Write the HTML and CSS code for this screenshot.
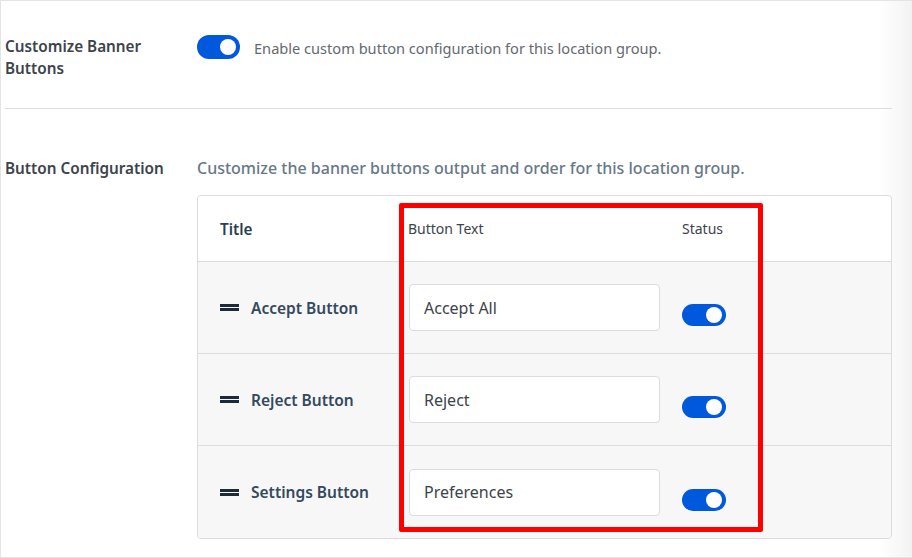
FILE: index.html
```html
<!DOCTYPE html>
<html lang="en">
<head>
    <meta charset="UTF-8">
    <meta name="viewport" content="width=device-width, initial-scale=1.0">
    <title>Banner Buttons</title>
    <link rel="stylesheet" href="styles.css">
</head>
<body>
    <div class="panel">
        <!-- Customize banner buttons -->
        <div class="setting setting-first">
            <div class="setting-label">Customize Banner Buttons</div>
            <div class="setting-field inline">
                <span class="toggle"><span class="knob"></span></span>
                <span class="hint">Enable custom button configuration for this location group.</span>
            </div>
        </div>

        <!-- Button configuration -->
        <div class="setting setting-second">
            <div class="setting-label">Button Configuration</div>
            <div class="setting-field">
                <p class="intro">Customize the banner buttons output and order for this location group.</p>

                <div class="btn-table">
                    <div class="tr th">
                        <div class="cell title-head">Title</div>
                        <div class="cell small-head">Button Text</div>
                        <div class="cell small-head">Status</div>
                    </div>
                    <div class="tr">
                        <div class="cell name"><span class="handle"></span>Accept Button</div>
                        <div class="cell"><input class="text-input" type="text" value="Accept All"></div>
                        <div class="cell status"><span class="toggle"><span class="knob"></span></span></div>
                    </div>
                    <div class="tr">
                        <div class="cell name"><span class="handle"></span>Reject Button</div>
                        <div class="cell"><input class="text-input" type="text" value="Reject"></div>
                        <div class="cell status"><span class="toggle"><span class="knob"></span></span></div>
                    </div>
                    <div class="tr last">
                        <div class="cell name"><span class="handle"></span>Settings Button</div>
                        <div class="cell"><input class="text-input" type="text" value="Preferences"></div>
                        <div class="cell status"><span class="toggle"><span class="knob"></span></span></div>
                    </div>

                    <!-- highlight box drawn over the columns -->
                    <div class="highlight"></div>
                </div>
            </div>
        </div>
    </div>
</body>
</html>
```

FILE: styles.css
```css
/* page */
body {
    margin: 0;
    font-family: "Noto Sans", "Open Sans", sans-serif;
    color: #3c434a;
    background: #fff;
}

.panel {
    box-sizing: border-box;
    height: 558px;
    border-top: 1px solid #e4e4e4;
    border-left: 1px solid #e4e4e4;
    border-bottom: 1px solid #e4e4e4;
    padding: 0 20px 0 4px;
    background: linear-gradient(to right, #fff 878px, #f3f3f3 910px, #e8e8e8 912px);
}

/* setting rows */
.setting {
    display: grid;
    grid-template-columns: 192px 1fr;
}

.setting-first {
    padding: 34px 0 29px;
    border-bottom: 1px solid #dcdcde;
}

.setting-second {
    padding-top: 48px;
}

.setting-label {
    font-size: 15.3px;
    font-weight: 600;
    line-height: 22px;
    color: #3c434a;
    padding-right: 16px;
}

.inline {
    display: flex;
    align-items: flex-start;
    gap: 14px;
}

.hint {
    font-size: 14.6px;
    line-height: 26px;
    color: #646970;
}

.intro {
    margin: 0 0 16px;
    font-size: 16px;
    font-weight: 500;
    line-height: 22px;
    color: #687887;
}

/* toggle */
.toggle {
    display: inline-flex;
    justify-content: flex-end;
    align-items: center;
    box-sizing: border-box;
    width: 43px;
    height: 24px;
    padding: 0 4px;
    border-radius: 12px;
    background: #0058dc;
    flex-shrink: 0;
}

.knob {
    width: 16px;
    height: 16px;
    border-radius: 50%;
    background: #fff;
}

/* table */
.btn-table {
    position: relative;
    border: 1px solid #dcdcde;
    border-radius: 4px;
}

.tr {
    display: grid;
    grid-template-columns: 188px 274px 1fr;
    align-items: center;
    height: 91px;
    padding-left: 22px;
    background: #f7f7f7;
    border-bottom: 1px solid #dcdcde;
}

.tr.th {
    height: 65px;
    background: #fff;
    border-radius: 4px 4px 0 0;
}

.tr.last {
    height: 92px;
    border-bottom: none;
    border-radius: 0 0 4px 4px;
}

.title-head {
    font-size: 15.3px;
    font-weight: 600;
    color: #2c3e50;
}

.small-head {
    font-size: 14px;
    color: #3c434a;
}

.name {
    display: flex;
    align-items: center;
    font-size: 15.5px;
    font-weight: 600;
    color: #34495e;
}

.handle {
    width: 19px;
    height: 7px;
    margin-right: 12px;
    border-top: 3px solid #1c2b3b;
    border-bottom: 3px solid #1c2b3b;
    box-sizing: border-box;
}

.text-input {
    box-sizing: border-box;
    width: 251px;
    height: 47px;
    margin-left: 1px;
    padding: 0 14px;
    border: 1px solid #dcdcde;
    border-radius: 4px;
    background: #fff;
    font-family: inherit;
    font-size: 16px;
    color: #3c434a;
}

.status .toggle {
    margin-top: 17px;
    height: 22px;
    width: 44px;
    border-radius: 11px;
}

/* red annotation */
.highlight {
    position: absolute;
    left: 201px;
    top: 7px;
    width: 364px;
    height: 329px;
    box-sizing: border-box;
    border: 5px solid #ff0000;
    border-radius: 2px;
    pointer-events: none;
}
```
